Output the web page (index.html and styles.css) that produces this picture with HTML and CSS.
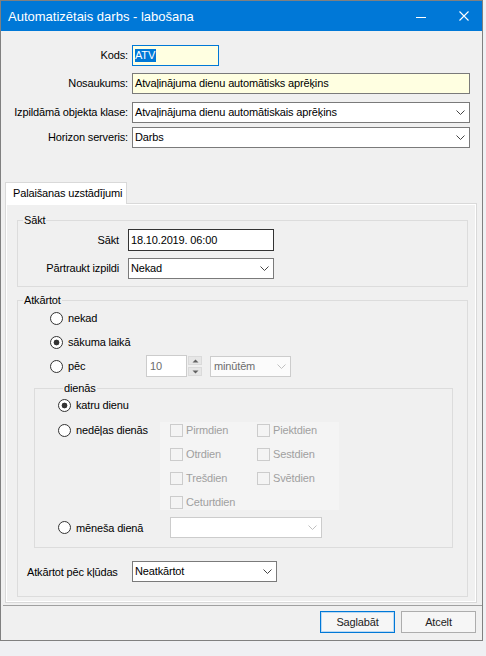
FILE: index.html
```html
<!DOCTYPE html>
<html lang="lv">
<head>
<meta charset="utf-8">
<title>Automatizētais darbs - labošana</title>
<link rel="stylesheet" href="styles.css">
</head>
<body>
<div class="window">
  <div class="titlebar">
    <span class="title">Automatizētais darbs - labošana</span>
    <span class="tb-min"><svg width="10" height="10" viewBox="0 0 10 10"><path d="M0 5.5H10" stroke="#fff" stroke-width="1"/></svg></span>
    <span class="tb-close"><svg width="10" height="10" viewBox="0 0 10 10"><path d="M0.5 0.5L9.5 9.5M9.5 0.5L0.5 9.5" stroke="#fff" stroke-width="1.1"/></svg></span>
  </div>
  <div class="content">
    <div class="header">
      <span class="hl">Kods:</span>
      <div class="field field-yellow field-focus field-short"><span class="sel">ATV</span></div>
      <span class="hl">Nosaukums:</span>
      <div class="field field-yellow">Atvaļinājuma dienu automātisks aprēķins</div>
      <span class="hl">Izpildāmā objekta klase:</span>
      <div class="field combo"><span>Atvaļinājuma dienu automātiskais aprēķins</span><svg class="chev" width="9" height="5" viewBox="0 0 9 5"><path d="M0.5 0.5L4.5 4.5L8.5 0.5" fill="none" stroke="#444"/></svg></div>
      <span class="hl">Horizon serveris:</span>
      <div class="field combo"><span>Darbs</span><svg class="chev" width="9" height="5" viewBox="0 0 9 5"><path d="M0.5 0.5L4.5 4.5L8.5 0.5" fill="none" stroke="#444"/></svg></div>
    </div>

    <div class="tabs"><div class="tab">Palaišanas uzstādījumi</div></div>

    <div class="panel">
      <fieldset class="group group-start">
        <legend>Sākt</legend>
        <div class="start-grid">
          <span class="lab">Sākt</span>
          <div class="field field-dark">18.10.2019. 06:00</div>
          <span class="lab">Pārtraukt izpildi</span>
          <div class="field combo"><span>Nekad</span><svg class="chev" width="9" height="5" viewBox="0 0 9 5"><path d="M0.5 0.5L4.5 4.5L8.5 0.5" fill="none" stroke="#444"/></svg></div>
        </div>
      </fieldset>

      <fieldset class="group group-repeat">
        <legend>Atkārtot</legend>
        <div class="radio-list">
          <div class="rrow"><span class="rb"><span class="radio"></span>nekad</span></div>
          <div class="rrow"><span class="rb"><span class="radio checked"></span>sākuma laikā</span></div>
          <div class="rrow">
            <span class="rb rb-pec"><span class="radio"></span>pēc</span>
            <div class="field disabled num">10</div>
            <div class="spin">
              <span class="spin-btn"><svg width="7" height="4" viewBox="0 0 7 4"><path d="M0.5 3.5L3.5 0.5L6.5 3.5Z" fill="#606060"/></svg></span>
              <span class="spin-btn"><svg width="7" height="4" viewBox="0 0 7 4"><path d="M0.5 0.5L3.5 3.5L6.5 0.5Z" fill="#606060"/></svg></span>
            </div>
            <div class="field combo disabled mins"><span>minūtēm</span><svg class="chev" width="9" height="5" viewBox="0 0 9 5"><path d="M0.5 0.5L4.5 4.5L8.5 0.5" fill="none" stroke="#c0c0c0"/></svg></div>
          </div>
        </div>

        <fieldset class="group group-days">
          <legend>dienās</legend>
          <div class="drow drow-first"><span class="rb"><span class="radio checked"></span>katru dienu</span></div>
          <div class="drow drow-week">
            <span class="rb rb-week"><span class="radio"></span>nedēļas dienās</span>
            <div class="weekdays">
              <span class="cb"><span class="box"></span>Pirmdien</span>
              <span class="cb"><span class="box"></span>Piektdien</span>
              <span class="cb"><span class="box"></span>Otrdien</span>
              <span class="cb"><span class="box"></span>Sestdien</span>
              <span class="cb"><span class="box"></span>Trešdien</span>
              <span class="cb"><span class="box"></span>Svētdien</span>
              <span class="cb"><span class="box"></span>Ceturtdien</span>
            </div>
          </div>
          <div class="drow drow-month">
            <span class="rb rb-month"><span class="radio"></span>mēneša dienā</span>
            <div class="field combo disabled month"><span></span><svg class="chev" width="9" height="5" viewBox="0 0 9 5"><path d="M0.5 0.5L4.5 4.5L8.5 0.5" fill="none" stroke="#c0c0c0"/></svg></div>
          </div>
        </fieldset>

        <div class="retry-row">
          <span class="retry-label">Atkārtot pēc kļūdas</span>
          <div class="field combo retry"><span>Neatkārtot</span><svg class="chev" width="9" height="5" viewBox="0 0 9 5"><path d="M0.5 0.5L4.5 4.5L8.5 0.5" fill="none" stroke="#444"/></svg></div>
        </div>
      </fieldset>
    </div>

    <div class="separator"></div>
    <div class="buttons">
      <button class="btn btn-default">Saglabāt</button>
      <button class="btn">Atcelt</button>
    </div>
  </div>
</div>
</body>
</html>
```

FILE: styles.css
```css
* { box-sizing: border-box; }

html, body {
  margin: 0;
  padding: 0;
}

body {
  background: #eff0f3;
  font-family: "Liberation Sans", Arial, sans-serif;
  font-size: 11px;
  letter-spacing: -0.15px;
  color: #000;
}

.window {
  width: 483px;
  height: 641px;
  border: 1px solid #808080;
  display: flex;
  flex-direction: column;
  background: #f0f0f0;
}

.titlebar {
  height: 30px;
  flex: none;
  background: #0078d7;
  color: #fff;
  display: flex;
  align-items: center;
  padding-left: 7px;
  padding-right: 13px;
}

.title {
  font-size: 13px;
  letter-spacing: 0;
  flex: 1;
  padding-top: 1px;
}

.tb-min, .tb-close {
  display: flex;
  width: 10px;
  height: 10px;
}

.tb-min { margin-right: 33px; margin-top: 1px; }

.content {
  flex: 1;
  display: flex;
  flex-direction: column;
}

/* header form */
.header {
  display: grid;
  grid-template-columns: 127px 338px;
  grid-template-rows: 28px 29px 25px 21px;
  column-gap: 4px;
  padding-top: 14px;
  align-items: start;
}

.hl {
  text-align: right;
  line-height: 21px;
  white-space: nowrap;
}

.field {
  height: 21px;
  border: 1px solid #7a7a7a;
  background: #fff;
  padding: 0 2px;
  line-height: 19px;
  white-space: nowrap;
  overflow: hidden;
}

.field-yellow { background: #ffffe1; }
.field-focus { border-color: #0078d7; }
.field-short { width: 87px; }
.field-dark { border-color: #333; height: 22px; line-height: 20px; }

.sel {
  display: inline-block;
  background: #0078d7;
  color: #fff;
  line-height: 13px;
  padding: 0 1px 0 0;
  vertical-align: middle;
  margin-top: -2px;
}

.combo {
  display: flex;
  align-items: center;
  justify-content: space-between;
  padding-right: 4px;
}

.chev { flex: none; }

.disabled {
  border-color: #cccccc;
  color: #6d6d6d;
}

/* tabs */
.tabs {
  margin-top: 34px;
  margin-left: 4px;
  margin-bottom: -1px;
  display: flex;
  position: relative;
  z-index: 1;
}

.tab {
  width: 122px;
  height: 22px;
  background: #fff;
  border: 1px solid #d9d9d9;
  border-bottom: none;
  padding-left: 7px;
  line-height: 20px;
  white-space: nowrap;
}

.panel {
  margin-left: 4px;
  margin-right: 5px;
  border: 1px solid #d9d9d9;
  box-shadow: inset 0 0 0 1px #fff;
  padding: 9px 8px 5px 11px;
}

/* group boxes */
.group {
  margin: 0;
  padding: 0;
  border: 1px solid #dcdcdc;
  min-width: 0;
}

.group legend {
  margin-left: 5px;
  padding: 0 1px;
  line-height: 14px;
}

.group-start { padding-bottom: 7px; }

.start-grid {
  display: grid;
  grid-template-columns: 101px 146px;
  grid-auto-rows: 22px;
  column-gap: 9px;
  row-gap: 6px;
  padding-top: 2px;
  align-items: center;
}

.lab {
  text-align: right;
  white-space: nowrap;
}

.group-repeat {
  margin-top: 6px;
  padding-bottom: 14px;
}

.radio-list {
  margin-top: -1px;
  padding-left: 32px;
}

.rrow {
  height: 24px;
  display: flex;
  align-items: center;
}

.rb {
  display: inline-flex;
  align-items: center;
  gap: 5px;
  white-space: nowrap;
  flex: none;
}

.radio {
  width: 13px;
  height: 13px;
  border: 1px solid #333;
  border-radius: 50%;
  background: #fff;
  flex: none;
}

.radio.checked {
  background: radial-gradient(circle at center, #333 0 2.6px, #fff 3.2px);
}

.rb-pec { width: 96px; }

.num {
  width: 41px;
  height: 22px;
  line-height: 20px;
  padding-left: 3px;
}

.spin {
  width: 14px;
  height: 20px;
  margin-left: 1px;
  display: flex;
  flex-direction: column;
  justify-content: space-between;
}

.spin-btn {
  height: 9px;
  background: #e6e6e6;
  border: 1px solid #dadada;
  display: flex;
  align-items: center;
  justify-content: center;
}

.mins {
  width: 81px;
  margin-left: 8px;
  background: #fbfbfb;
  padding-left: 3px;
}

.group-days {
  margin: 3px 14px 0 16px;
  padding: 0 0 9px 23px;
}

.drow {
  display: flex;
  align-items: center;
}

.drow-first { margin-top: 2px; height: 16px; }

.drow-week {
  margin-top: 9px;
  align-items: flex-start;
}

.rb-week { width: 102px; height: 16px; }

.weekdays {
  width: 179px;
  height: 88px;
  background: #f4f4f4;
  padding-left: 10px;
  display: grid;
  grid-template-columns: 87px 82px;
  grid-auto-rows: 16px;
  row-gap: 8px;
}

.cb {
  display: flex;
  align-items: center;
  gap: 3px;
  color: #a0a0a0;
  white-space: nowrap;
}

.box {
  width: 13px;
  height: 13px;
  border: 1px solid #cccccc;
  flex: none;
}

.drow-month { margin-top: 7px; }

.rb-month { width: 112px; }

.month {
  width: 152px;
  background: #fff;
}

.retry-row {
  margin-top: 13px;
  padding-left: 9px;
  display: flex;
  align-items: center;
}

.retry-label {
  width: 105px;
  white-space: nowrap;
}

.retry { width: 145px; }

/* footer */
.separator {
  margin-top: 2px;
  margin-left: 2px;
  height: 1px;
  background: #a0a0a0;
}

.buttons {
  margin-top: 5px;
  padding-right: 6px;
  display: flex;
  justify-content: flex-end;
  gap: 6px;
}

.btn {
  width: 75px;
  height: 22px;
  margin: 0;
  padding: 0;
  font-family: "Liberation Sans", Arial, sans-serif;
  font-size: 11px;
  letter-spacing: -0.15px;
  color: #222;
  background: #f6f6f6;
  border: 1px solid #adadad;
  border-radius: 0;
}

.btn-default {
  border-color: #0078d7;
  box-shadow: inset 0 0 0 1px #bcd9f2;
}
```
